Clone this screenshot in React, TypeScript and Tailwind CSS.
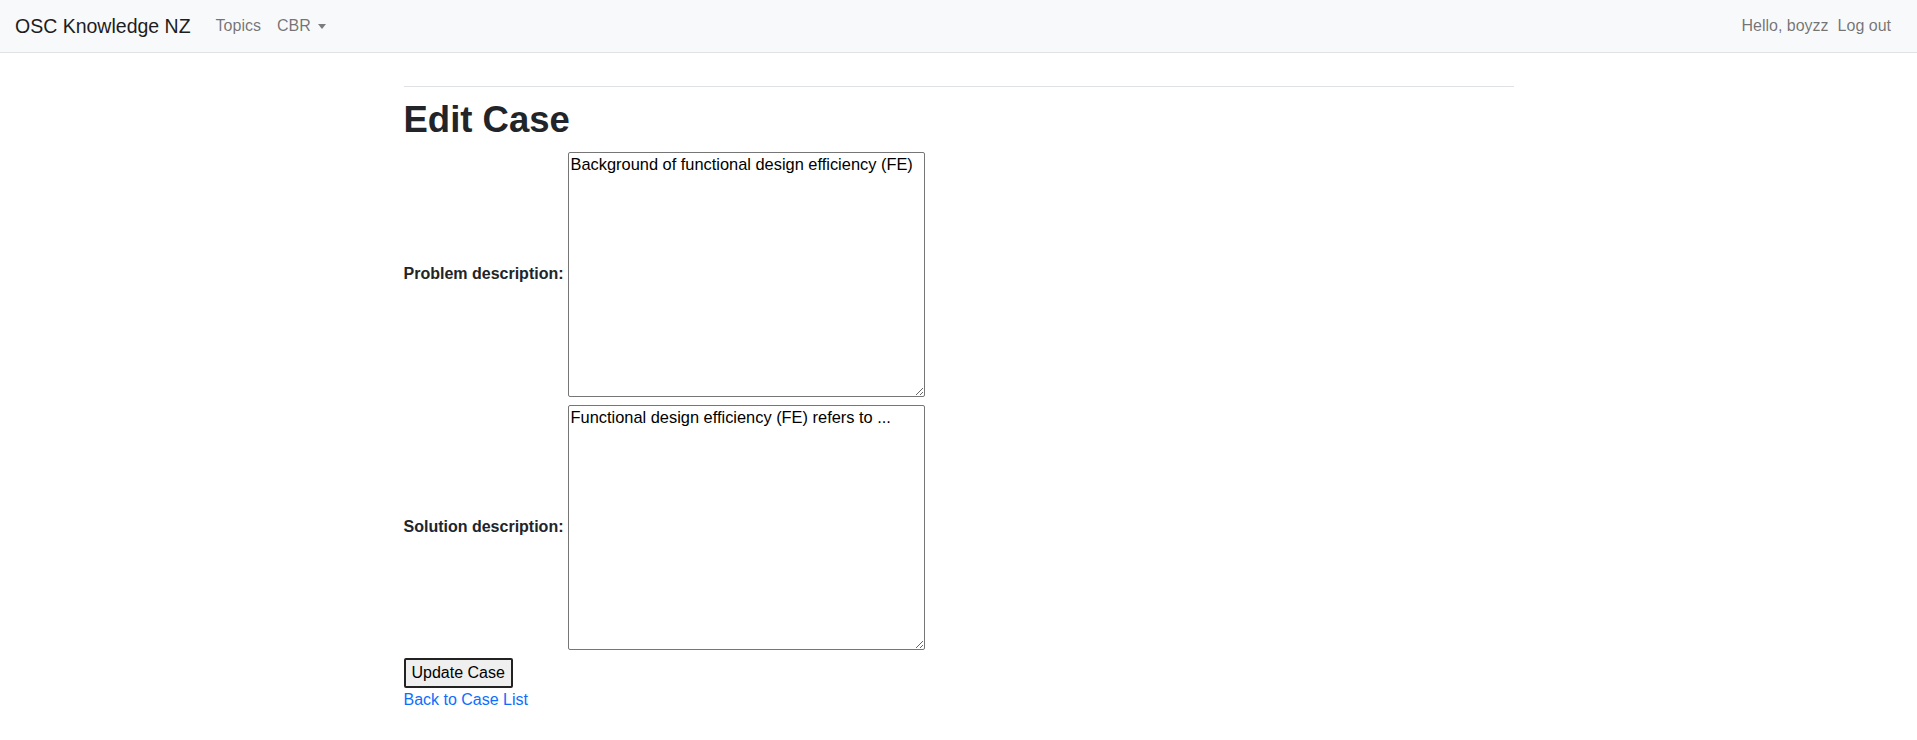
export default function App() {
  const rows = [
    { label: "Problem description:", value: "Background of functional design efficiency (FE)" },
    { label: "Solution description:", value: "Functional design efficiency (FE) refers to ..." },
  ];

  return (
    <div className="min-h-screen bg-white font-['Liberation_Sans',Arial,sans-serif] text-[#212529]">
      <nav className="flex h-[53px] items-center justify-between border-b border-[#dfe1e4] bg-[#f8f9fa] pl-[15px] pr-[26px]">
        <div className="flex items-center">
          <a href="#" className="text-[19.5px] leading-[30px] text-[#1d1d1f]">OSC Knowledge NZ</a>
          <a href="#" className="ml-[25px] text-[16px] leading-6 text-[rgba(0,0,0,0.55)]">Topics</a>
          <a href="#" className="ml-[16px] flex items-center text-[16px] leading-6 text-[rgba(0,0,0,0.55)]">
            CBR
            <span className="ml-[7px] mt-[1px] h-0 w-0 border-x-[4.5px] border-t-[5px] border-x-transparent border-t-[rgba(0,0,0,0.5)]" />
          </a>
        </div>
        <div className="flex items-center gap-[9px] text-[16px] leading-6 text-[rgba(0,0,0,0.55)]">
          <span>Hello, boyzz</span>
          <a href="#">Log out</a>
        </div>
      </nav>

      <main className="mx-auto w-[1110px]">
        <hr className="mt-[33px] border-t border-[#dfe1e5]" />
        <h1 className="mt-[11px] text-[36.5px] font-semibold leading-[1.2] text-[#212529]">Edit Case</h1>

        <form className="mt-[10px]">
          <div className="grid grid-cols-[max-content_max-content] items-center gap-x-[4px] gap-y-[8px]">
            {rows.map((r) => (
              <div key={r.label} className="contents">
                <label className="text-[16px] font-bold leading-6">{r.label}</label>
                <textarea
                  defaultValue={r.value}
                  className="block h-[245px] w-[357px] rounded-[2px] border border-[#767676] p-[2px] font-['Liberation_Sans',Arial,sans-serif] text-[16.4px] leading-[19px] text-black"
                />
              </div>
            ))}
          </div>
          <button
            type="button"
            className="mt-[8px] block h-[30px] rounded-[2px] border-2 border-[#222] bg-[#efefef] px-[6px] text-[16px] leading-[18px] text-black"
          >
            Update Case
          </button>
        </form>
        <a href="#" className="block text-[16px] leading-6 text-[#0d6efd]">Back to Case List</a>
      </main>
    </div>
  );
}
